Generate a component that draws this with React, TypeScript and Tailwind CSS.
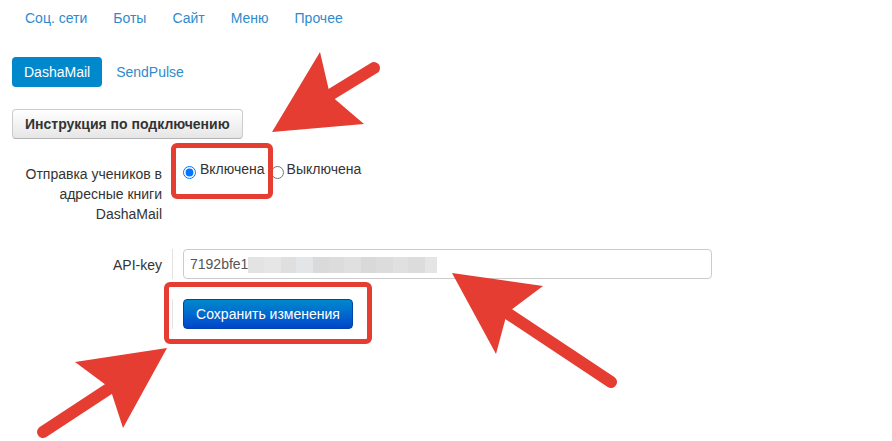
import React from "react";

const blur: [number, string][] = [
  [16, "bg-[#e3e3e3]"],
  [17, "bg-[#e6e6e6]"],
  [15, "bg-[#dfdfdf]"],
  [17, "bg-[#e3e5e7]"],
  [16, "bg-[#dadada]"],
  [15, "bg-[#dcdcdc]"],
  [17, "bg-[#e0e0e0]"],
  [15, "bg-[#d9d9d9]"],
  [17, "bg-[#dcdcdc]"],
  [15, "bg-[#e0e0e0]"],
  [17, "bg-[#dcdcdc]"],
  [12, "bg-[#e3e5e7]"],
];

export default function App() {
  return (
    <div className="relative w-[892px] h-[441px] overflow-hidden bg-white text-[14px] leading-[20px] text-[#333] font-['Liberation_Sans',Arial,sans-serif]">
      {/* top nav */}
      <nav className="flex pl-[13px] pt-[8px] gap-[2px]">
        {["Соц. сети", "Боты", "Сайт", "Меню", "Прочее"].map((t) => (
          <a key={t} className="px-[12px] text-[#2f8bcc] cursor-pointer">
            {t}
          </a>
        ))}
      </nav>

      {/* pills */}
      <div className="flex pl-[12px] mt-[29px] gap-[2px]">
        <span className="px-[12px] py-[8px] leading-[14px] rounded-[4px] bg-[#0088cc] text-white">
          DashaMail
        </span>
        <span className="px-[12px] py-[8px] leading-[14px] text-[#2f8bcc]">SendPulse</span>
      </div>

      {/* instruction button */}
      <div className="mt-[22px] pl-[12px]">
        <button className="h-[30px] px-[12px] rounded-[4px] border border-[#cccccc] border-b-[#b3b3b3] bg-gradient-to-b from-white to-[#e6e6e6] font-bold text-[#333] leading-[20px]">
          Инструкция по подключению
        </button>
      </div>

      {/* form */}
      <div className="mt-[20px]">
        <div className="flex">
          <div className="w-[162px] text-right pt-[5px]">
            Отправка учеников в адресные книги DashaMail
          </div>
          <div className="ml-[10px] border-l border-transparent pl-[10px] flex items-start">
            <input type="radio" name="r" defaultChecked className="m-0 mt-[7px] w-[13px] h-[13px]" />
            <span className="ml-[4px]">Включена</span>
            <input type="radio" name="r" className="m-0 mt-[7px] ml-[6px] w-[13px] h-[13px]" />
            <span className="ml-[3px]">Выключена</span>
          </div>
        </div>

        <div className="flex mt-[25px]">
          <div className="w-[162px] text-right pt-[6px]">API-key</div>
          <div className="ml-[10px] border-l border-[#e3e3e3] pl-[10px]">
            <div className="w-[529px] h-[30px] rounded-[4px] border border-[#cccccc] px-[6px] flex items-center text-[#555]">
              <span>7192bfe1</span>
              <div className="flex h-[16px] mt-[2px]">
                {blur.map(([w, c], i) => (
                  <div key={i} className={c} style={{ width: w }} />
                ))}
              </div>
            </div>
          </div>
        </div>

        <div className="flex mt-[20px]">
          <div className="w-[162px]" />
          <div className="ml-[10px] border-l border-[#e3e3e3] pl-[10px]">
            <button className="w-[170px] h-[30px] rounded-[4px] border border-[#0044aa] bg-gradient-to-b from-[#0088cc] to-[#0044cc] text-white leading-[20px]">
              Сохранить изменения
            </button>
          </div>
        </div>
      </div>

      {/* red highlight boxes */}
      <div className="absolute left-[171px] top-[143px] w-[102px] h-[56px] border-[5px] border-[#e53d31] rounded-[6px]" />
      <div className="absolute left-[164px] top-[282px] w-[208px] h-[62px] border-[5px] border-[#e53d31] rounded-[6px]" />

      {/* arrows */}
      <svg className="absolute inset-0 pointer-events-none" width="892" height="441" viewBox="0 0 892 441">
        <g fill="#e53d31" stroke="#e53d31" strokeLinecap="round">
          <line x1="330" y1="95" x2="374" y2="68" strokeWidth="12" />
          <polygon points="272,132 320,52 330,95 364,124" stroke="none" />

          <line x1="110" y1="388" x2="43" y2="432" strokeWidth="12" />
          <polygon points="167,348 75,362 110,388 123,428" stroke="none" />

          <line x1="507" y1="313" x2="611" y2="382" strokeWidth="12" />
          <polygon points="452,273 543,286 507,313 496,354" stroke="none" />
        </g>
      </svg>
    </div>
  );
}
